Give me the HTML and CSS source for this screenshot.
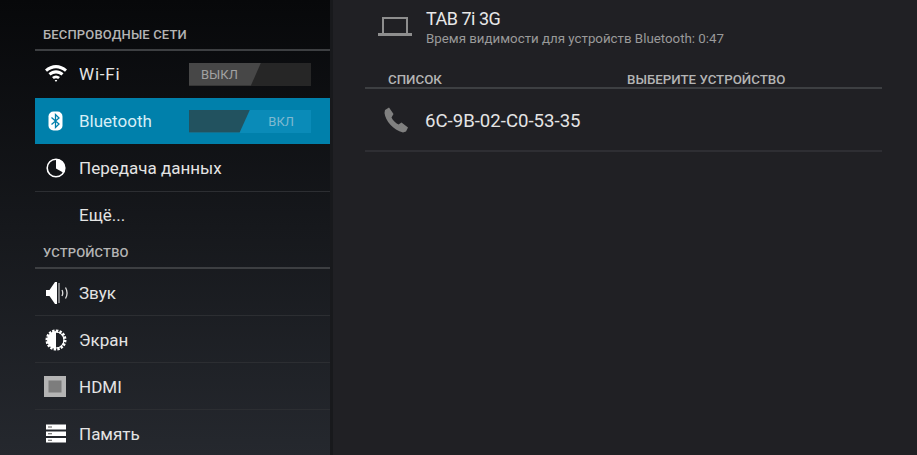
FILE: index.html
```html
<!DOCTYPE html>
<html lang="ru">
<head>
    <meta charset="UTF-8">
    <meta name="viewport" content="width=device-width, initial-scale=1.0">
    <title>Настройки</title>
    <link rel="stylesheet" href="styles.css">
</head>
<body>

    <!-- Left settings list -->
    <div class="sidebar">
        <div class="section first">Беспроводные сети</div>

        <div class="row no-line">
            <svg class="icon" viewBox="0 0 24 24"><path fill="#fff" d="M1 7.500C7.500 1.500 16.500 1.500 23 7.500L21 9.800C15.500 5 8.500 5 3 9.800ZM4.500 11.300C9 7.300 15 7.300 19.500 11.300L17.500 13.600C14 10.700 10 10.700 6.500 13.600ZM8 15C10.500 13 13.500 13 16 15L14.200 17.100C12.800 16.100 11.200 16.100 9.800 17.100ZM10.700 18.300C11.500 17.800 12.500 17.800 13.300 18.300L12 20Z"/></svg>
            <span class="label wifi">Wi-Fi</span>
            <div class="toggle off"><span class="thumb">ВЫКЛ</span></div>
        </div>

        <div class="row active">
            <svg class="icon" viewBox="0 0 24 24"><rect x="4.500" y="2.500" width="14" height="19" rx="5" fill="#fff"/><path fill="none" stroke="#0080ab" stroke-width="1.300" d="M7.500 8.500L15 15L11.500 18.500V5.500L15 9L7.500 15.500"/></svg>
            <span class="label">Bluetooth</span>
            <div class="toggle on"><span class="thumb">ВКЛ</span></div>
        </div>

        <div class="row">
            <svg class="icon" viewBox="0 0 24 24"><circle cx="12" cy="12" r="8.800" fill="none" stroke="#fff" stroke-width="1.600"/><path fill="#fff" d="M12 3A9 9 0 0 1 19.500 16.800L12 12.500Z"/></svg>
            <span class="label">Передача данных</span>
        </div>

        <div class="row no-line">
            <span class="icon"></span>
            <span class="label">Ещё...</span>
        </div>

        <div class="section second">Устройство</div>

        <div class="row low">
            <svg class="icon" viewBox="0 0 24 24"><path fill="#fff" d="M2 9H5.500L11 1H13V23H11L5.500 15H2Z"/><path fill="none" stroke="#ddd" stroke-width="1" d="M15 2V22"/><path fill="none" stroke="#ddd" stroke-width="1.300" d="M18 9C19 11 19 13 18 15M21.500 6.500C23.500 10 23.500 14 21.500 17.500"/></svg>
            <span class="label">Звук</span>
        </div>

        <div class="row low">
            <svg class="icon" viewBox="0 0 24 24"><path fill="none" stroke="#fff" stroke-width="3" stroke-dasharray="2.300 1.200" d="M12 3A9 9 0 1 1 12 21A9 9 0 1 1 12 3Z"/><path fill="#fff" d="M12 3A9 9 0 0 0 12 21Z"/><path fill="none" stroke="#fff" stroke-width="1.200" d="M12 4A8 8 0 0 1 12 20"/></svg>
            <span class="label">Экран</span>
        </div>

        <div class="row low">
            <svg class="icon" viewBox="0 0 24 24"><rect x="0" y="1" width="22" height="21" fill="#b4b4b4"/><rect x="4.500" y="5.500" width="13" height="12" fill="#7d7d7d"/></svg>
            <span class="label">HDMI</span>
        </div>

        <div class="row low no-line">
            <svg class="icon" viewBox="0 0 24 24"><path fill="#fff" d="M2 2.500H22V7.500H2ZM2 9.500H22V14H2ZM2 16H22V20.500H2Z"/><path fill="#555" d="M4 4.500H8V5.500H4ZM4 11.300H8V12.300H4ZM4 17.800H8V18.800H4Z"/></svg>
            <span class="label">Память</span>
        </div>
    </div>

    <!-- Bluetooth details -->
    <div class="content">
        <div class="device">
            <svg class="laptop" viewBox="0 0 34 19"><path fill="none" stroke="#8e8e8e" stroke-width="2" d="M5 16V1H29V16"/><path fill="#8e8e8e" d="M0 16H34V19H0Z"/></svg>
            <div>
                <div class="device-name">TAB 7i 3G</div>
                <div class="device-sub">Время видимости для устройств Bluetooth: 0:47</div>
            </div>
        </div>

        <div class="list-head">
            <span class="head-left">Список</span>
            <span>Выберите устройство</span>
        </div>

        <div class="paired">
            <svg class="phone" viewBox="0 0 24 26"><path fill="#808080" d="M1 3L5 0.500L9.500 7L7.500 10.500C9 13.500 11.500 16 14.500 17.500L17.500 15.500L24 20.500L22 24.500L19 25.500C9 23 1.500 14 0.500 6Z"/></svg>
            <span class="paired-name">6C-9B-02-C0-53-35</span>
        </div>
    </div>

</body>
</html>
```

FILE: styles.css
```css
/* Basic styling for the page */
html, body {
    height: 100%;
}

body {
    margin: 0;
    display: flex;
    height: 455px;
    overflow: hidden;
    font-family: Roboto, "Liberation Sans", sans-serif;
    background-color: #202024;
    color: #e4e4e4;
}

/* Sidebar */
.sidebar {
    width: 295px;
    height: 455px;
    padding-left: 35px;
    flex-shrink: 0;
    background: linear-gradient(to bottom, #07080a, #25282e);
    border-right: 3px solid #18191c;
}

.section {
    height: 26px;
    padding-top: 1px;
    padding-bottom: 2px;
    padding-left: 8px;
    display: flex;
    align-items: center;
    border-bottom: 2px solid #3d3f42;
    font-size: 13px;
    font-weight: 500;
    letter-spacing: 0.15px;
    text-transform: uppercase;
    color: #b4b4b4;
}

.section.first {
    margin-top: 20px;
}

.section.second {
    height: 25px;
}

.row {
    height: 46px;
    display: flex;
    align-items: center;
    border-bottom: 1px solid #2c2e32;
}

.row.low {
    height: 45px;
    padding-top: 1px;
}

.row.no-line {
    border-bottom-color: transparent;
}

.row.active {
    background-color: #0080ab;
    background-clip: padding-box;
    border-bottom-color: transparent;
}

.icon {
    width: 24px;
    height: 24px;
    margin-left: 9px;
    flex-shrink: 0;
}

.label {
    margin-left: 11px;
    width: 110px;
    font-size: 17px;
    white-space: nowrap;
}

.label.wifi {
    letter-spacing: 0.8px;
}

.row.active .label {
    color: #d6eef6;
}

/* On/off switches */
.toggle {
    width: 122px;
    height: 23px;
    position: relative;
    font-size: 13px;
    color: #a2a2a2;
}

.toggle.off {
    background-color: #262626;
}

.toggle.on {
    background-color: #0a8bb8;
    color: #7fb9d0;
}

.thumb {
    position: absolute;
    top: 0;
    height: 23px;
    line-height: 23px;
}

.toggle.off .thumb {
    left: 0;
    width: 72px;
    padding-left: 12px;
    box-sizing: border-box;
    background-color: #474747;
    clip-path: polygon(0 0, 100% 0, 86% 100%, 0 100%);
}

.toggle.on::before {
    content: "";
    position: absolute;
    left: 0;
    top: 0;
    width: 61px;
    height: 23px;
    background-color: #22525f;
    clip-path: polygon(0 0, 100% 0, 83% 100%, 0 100%);
}

.toggle.on .thumb {
    right: 17px;
}

/* Main Content */
.content {
    flex: 1;
    padding: 0 35px 0 32px;
}

.device {
    height: 65px;
    display: flex;
    align-items: flex-start;
}

.laptop {
    width: 34px;
    height: 19px;
    margin: 17px 14px 0 13px;
    flex-shrink: 0;
}

.device-name {
    margin-top: 8px;
    font-size: 18px;
    line-height: 21px;
    letter-spacing: -0.5px;
    color: #e8e8e8;
}

.device-sub {
    margin-top: 1px;
    font-size: 13.3px;
    line-height: 18px;
    color: #9a9a9a;
}

.list-head {
    height: 24px;
    padding-left: 23px;
    display: flex;
    align-items: flex-end;
    border-bottom: 2px solid #3d3f42;
    font-size: 13.3px;
    font-weight: 500;
    line-height: 14px;
    text-transform: uppercase;
    color: #b4b4b4;
    box-sizing: border-box;
}

.head-left {
    width: 239px;
}

.paired {
    height: 63px;
    display: flex;
    align-items: center;
    border-bottom: 2px solid #2e2e33;
    box-sizing: border-box;
}

.phone {
    width: 24px;
    height: 26px;
    margin: 0 18px 0 19px;
    flex-shrink: 0;
}

.paired-name {
    margin-top: 3px;
    margin-left: -1px;
    font-size: 18.6px;
    color: #e4e4e4;
}
```
